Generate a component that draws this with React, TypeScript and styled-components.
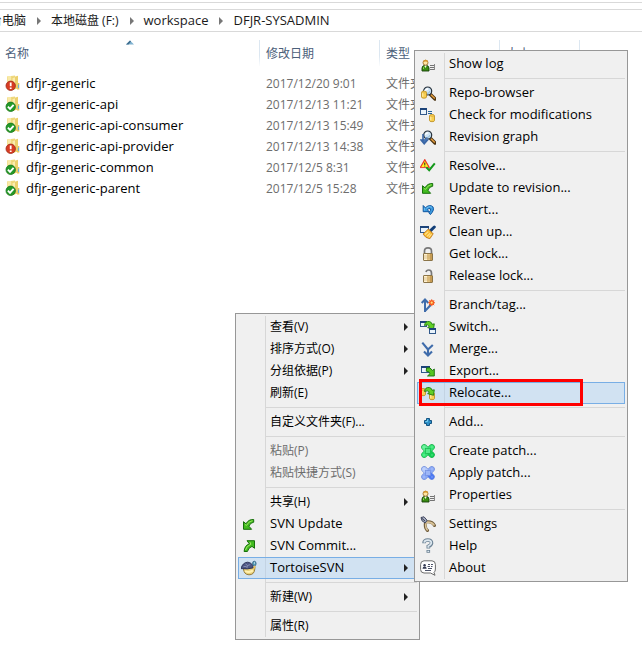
import React from "react";
import styled, { createGlobalStyle, css } from "styled-components";

const GlobalStyle = createGlobalStyle`
  *, *::before, *::after { box-sizing: border-box; }
  body {
    margin: 0;
    background: #fff;
    color: #000;
    font-family: "Open Sans", "Noto Sans CJK SC", sans-serif;
    font-size: 12px;
    overflow: hidden;
  }
  button { font: inherit; color: inherit; background: none; border: 0; padding: 0; margin: 0; }
`;

const Explorer = styled.main`
  position: relative;
  min-height: 100vh;
  overflow: hidden;
`;

/* ---------- Address bar ---------- */

const ToolbarEdge = styled.div`
  height: 10px;
  padding-top: 2px;
  border-bottom: 1px solid #d9d9d9;
  &::before { content: ""; display: block; border-top: 1px solid #d9d9d9; }
`;

const AddressBar = styled.nav`
  display: flex;
  align-items: center;
  height: 22px;
  border-bottom: 1px solid #d9d9d9;
  white-space: nowrap;
`;

const Crumb = styled.button<{ $clipped?: boolean; $latin?: boolean }>`
  font-size: ${(p) => (p.$latin ? 13 : 12)}px;
  line-height: 20px;
  color: #1a1a1a;
  ${(p) => p.$latin && "padding-bottom: 2px;"}
  ${(p) =>
    p.$clipped &&
    css`
      display: flex;
      justify-content: flex-end;
      width: 26px;
      overflow: hidden;
    `}
`;

const CrumbArrow = styled.svg`
  flex: none;
  width: 25px;
  height: 8px;
`;

/* ---------- File list ---------- */

const FileTable = styled.table`
  width: 580px;
  table-layout: fixed;
  border-collapse: separate;
  border-spacing: 0;
  margin-top: 8px;
`;

const HeadCell = styled.th`
  position: relative;
  height: 26px;
  padding: 2px 0 0 6px;
  text-align: left;
  font-weight: 400;
  line-height: 20px;
  color: #4c607a;
  border-right: 1px solid;
  border-image: linear-gradient(#dce7f1, #dce7f1 60%, #fff) 1;
  &:first-child { padding-left: 5px; }
`;

const SortMark = styled.svg`
  position: absolute;
  top: 0;
  left: 50%;
  width: 8px;
  height: 5px;
  margin-left: -4px;
`;

const ListBody = styled.tbody`
  &::before { content: ""; display: block; height: 7px; }
`;

const Cell = styled.td`
  height: 21px;
  padding: 0 0 0 6px;
  line-height: 20px;
  color: #6d6d6d;
  white-space: nowrap;
`;

const NameCell = styled(Cell)`
  padding-left: 5px;
  font-size: 13px;
  color: #000;
`;

const NameLine = styled.div`
  display: flex;
  align-items: center;
  gap: 5px;
  height: 20px;
  padding-bottom: 2px;
`;

/* ---------- Menus ---------- */

const Menu = styled.ul<{ $x: number; $y: number; $width: number }>`
  position: absolute;
  left: ${(p) => p.$x}px;
  top: ${(p) => p.$y}px;
  width: ${(p) => p.$width}px;
  margin: 0;
  padding: 2px;
  list-style: none;
  border: 1px solid #979797;
  background: linear-gradient(#d7d7d7, #d7d7d7) 29px 2px / 1px calc(100% - 4px) no-repeat #f0f0f0;
`;

const MenuItem = styled.button<{ $active?: boolean; $latin?: boolean }>`
  display: flex;
  align-items: center;
  width: 100%;
  height: 22px;
  padding: 0 8px 0 2px;
  border: 1px solid transparent;
  text-align: left;
  white-space: nowrap;
  line-height: 20px;
  font-size: ${(p) => (p.$latin ? 13 : 12)}px;
  ${(p) =>
    p.$active &&
    css`
      border-color: #78aee5;
      background: linear-gradient(#c3d3e3, #c3d3e3) 26px 0 / 1px 100% no-repeat #d1e2f2;
    `}
  &:disabled { color: #6d6d6d; }
`;

const IconSlot = styled.span`
  display: flex;
  width: 16px;
  height: 16px;
  margin-right: 13px;
`;

const Label = styled.span<{ $latin?: boolean }>`
  flex: 1;
  padding-bottom: ${(p) => (p.$latin ? 2 : 0)}px;
`;

const Separator = styled.li`
  height: 7px;
  margin-left: 28px;
  padding-top: 3px;
  &::before { content: ""; display: block; border-top: 1px solid #d7d7d7; }
`;

const SubmenuArrow = styled.svg`
  width: 4px;
  height: 8px;
`;

const Highlight = styled.div`
  position: absolute;
  left: 419px;
  top: 379px;
  width: 164px;
  height: 27px;
  border: 3px solid #f00;
  pointer-events: none;
`;

/* ---------- Icons ---------- */

const Svg = styled.svg`
  display: block;
  flex: none;
  width: 16px;
  height: 16px;
`;

const Glyph = ({ children }: { children: React.ReactNode }) => (
  <Svg viewBox="0 0 16 16" aria-hidden="true">
    {children}
  </Svg>
);

const Lens = () => (
  <g>
    <path d="M10.5 9.5 15 14" stroke="#4a3210" strokeWidth="3.4" strokeLinecap="round" />
    <path d="M11 9.7 14.8 13.5" stroke="#e8a040" strokeWidth="1.4" />
    <circle cx="7.7" cy="6" r="4" fill="#cfe4f4" stroke="#27313b" strokeWidth="1.2" />
    <path d="M5.3 5.7Q6 3.7 8.2 3.8" stroke="#fff" strokeWidth="1.2" fill="none" />
    <path d="M7 8.5Q9.5 8.5 10 6" stroke="#8db9d9" fill="none" />
  </g>
);

const Drum = ({ x, y }: { x: number; y: number }) => (
  <g transform={`translate(${x} ${y})`}>
    <path d="M.5 1.8Q.5.5 3 .5T5.5 1.8V6.5Q5.5 7.7 3 7.7T.5 6.5Z" fill="#f8cf52" stroke="#b98a1c" strokeWidth=".8" />
    <path d="M1.8 2.2V6.2" stroke="#fff0b0" />
    <path d="M1 2Q3 3 5 2" stroke="#d8a735" strokeWidth=".6" fill="none" />
  </g>
);

const Pane = ({ x, y, w = 7, h = 6 }: { x: number; y: number; w?: number; h?: number }) => (
  <g transform={`translate(${x} ${y})`}>
    <rect x=".5" y=".5" width={w - 1} height={h - 1} fill="#e9f3fb" stroke="#31588a" />
    <path d={`M0 1H${w}`} stroke="#1c4379" strokeWidth="2" />
  </g>
);

const Swoop = () => (
  <path
    d="M4.5 6.5Q5 2 9.3 2.5 11.8 3 12 5.3L14.3 4.8 13.5 10.3 7.6 8.6 9.4 7.3Q7.8 4.8 4.5 6.5Z"
    fill="#62cf26"
    stroke="#1e7d10"
    strokeWidth=".9"
  />
);

const Cross = ({ light, mid, dark, edge }: { light: string; mid: string; dark: string; edge: string }) => (
  <g>
    <path d="M4.2 4.2 11.8 11.8M11.8 4.2 4.2 11.8" stroke={edge} strokeWidth="6" strokeLinecap="round" />
    <path d="M4.2 4.2 8 8" stroke={light} strokeWidth="4.8" strokeLinecap="round" />
    <path d="M11.8 4.2 4.2 11.8" stroke={mid} strokeWidth="4.8" strokeLinecap="round" />
    <path d="M8 8 11.8 11.8" stroke={dark} strokeWidth="4.8" strokeLinecap="round" />
    <rect x="5.5" y="5.5" width="5" height="5" fill={mid} stroke={edge} strokeWidth=".6" />
    <path d="M6.5 7H7.5M8.5 7H9.5M6.5 9H7.5M8.5 9H9.5M3.5 4H4.5M11.5 4H12.5M3.5 12H4.5M11.5 12H12.5" stroke="#fff" strokeOpacity=".6" />
  </g>
);

const Padlock = ({ open }: { open?: boolean }) => (
  <g>
    <path
      d={open ? "M11.5 7V5Q11.5 2 8.7 2 6.5 2 6 4" : "M4.5 8V5Q4.5 1.8 8 1.8T11.5 5V8"}
      stroke="#777"
      strokeWidth="1.7"
      fill="none"
    />
    <rect x="3.5" y="7.5" width="9" height="7" rx=".5" fill="#e4c383" stroke="#8a7448" />
    <rect x="4" y="8" width="3" height="6" fill="#fff1cf" />
    <rect x="10" y="8" width="2" height="6" fill="#c99c51" />
    <path d="M4 10H12M4 12H12" stroke="#b8985c" strokeWidth=".5" />
  </g>
);

const icons = {
  user: (
    <Glyph>
      <path d="M2 15V12Q2.2 9.3 5.5 9.3T9 12V15Z" fill="#398c13" stroke="#173f09" strokeWidth=".9" />
      <path d="M3.5 13V11.5Q4 10.3 5 10.3" stroke="#91d948" fill="none" />
      <path d="M4.6 9.3H6.7L5.7 12.2Z" fill="#fff" />
      <circle cx="5.5" cy="6.7" r="2.5" fill="#ffe6a3" stroke="#91621d" strokeWidth=".8" />
      <path d="M3.1 6.2Q3.3 3.8 5.7 3.8T8 6.2Q6 5 3.1 6.2Z" fill="#d6962c" />
      <path d="M10 9.5H15M10 11.5H15M10 13.5H15" stroke="#737373" />
      <path d="M14.5 8V14" stroke="#888" />
    </Glyph>
  ),
  repo: (
    <Glyph>
      <Lens />
      <Drum x={1} y={5.5} />
      <path d="M4.5 6Q5.5 3.8 8 4" stroke="#fff" fill="none" />
    </Glyph>
  ),
  check: (
    <Glyph>
      <Pane x={0} y={1} w={7} h={7} />
      <path d="M8 4.5H12M8 6.5H12" stroke="#28659b" />
      <Drum x={9} y={7} />
    </Glyph>
  ),
  graph: (
    <Glyph>
      <Lens />
      <path d="M3 5V12M1 11H7.5L4.2 14.8Z" fill="#3f6cab" stroke="#3a66a5" strokeWidth="1.6" />
      <path d="M4 12.5 7.2 8.5" stroke="#4776b6" strokeWidth="1.6" />
    </Glyph>
  ),
  resolve: (
    <Glyph>
      <path d="M4.8 1.2 9.6 9.6H0Z" fill="#e8200f" stroke="#e8200f" strokeWidth=".6" strokeLinejoin="round" />
      <path d="M4.8 2.8 8.4 9H1.2Z" fill="#fff022" />
      <path d="M4.8 4.6V6.9M4.8 7.6V8.5" stroke="#151515" />
      <path d="M6.3 9.2 9.2 12.2 14.8 5.3" stroke="#14991b" strokeWidth="2" fill="none" />
    </Glyph>
  ),
  update: (
    <Glyph>
      <path
        d="M2.5 13.3V5.7L5 7.8Q7.5 3.2 12.7 3.5V6.2Q9.3 6.5 7.9 10.2L10.6 13.3Z"
        fill="#42bb20"
        stroke="#176f0c"
        strokeLinejoin="round"
      />
      <path d="M4 8.5 5.6 9.4Q7.5 5.2 11.5 4.7" stroke="#98e55b" fill="none" />
    </Glyph>
  ),
  commit: (
    <Glyph>
      <path
        d="M13.5 2.7V10.3L11 8.4Q7.5 9.5 6.4 13.5H3.1Q3.5 7.5 8.4 5.8L6 2.7Z"
        fill="#42bb20"
        stroke="#176f0c"
        strokeLinejoin="round"
      />
      <path d="M4.5 12Q5.3 8 9.9 6.2L9 4.2" stroke="#a3ea66" fill="none" />
    </Glyph>
  ),
  revert: (
    <Glyph>
      <path
        d="M3.2 3.5V9.7H9.3L7.3 7.8Q9 6 10.3 6.6 11.6 7.8 8.8 10.8L10.4 12.6Q15 7.7 12.8 4.7 9.5 2 5.4 5.8Z"
        fill="#3b9be0"
        stroke="#11569f"
      />
      <path d="M4.4 6V8.5M6.3 6.2Q9.5 3.4 12 5.3" stroke="#7cc8f5" strokeWidth=".8" fill="none" />
    </Glyph>
  ),
  clean: (
    <Glyph>
      <Pane x={0} y={2} w={9} h={7} />
      <path d="M10.8 6.3 14.3 3" stroke="#123f78" strokeWidth="3" strokeLinecap="round" />
      <path d="M3 10 8.4 5 13.2 9.8 9.9 14.7Q5.5 14.4 3 10Z" fill="#f8ba31" stroke="#bd731a" strokeWidth=".8" />
      <path d="M5 10.5 8.3 7.7M7 12.4 10 9.4M8.7 13.5 11.5 10.2" stroke="#ffe491" strokeWidth="1.1" />
      <path d="M8.5 5.5 12.5 9.5" stroke="#c98a2a" />
    </Glyph>
  ),
  lock: (
    <Glyph>
      <Padlock />
    </Glyph>
  ),
  unlock: (
    <Glyph>
      <Padlock open />
    </Glyph>
  ),
  branch: (
    <Glyph>
      <path d="M5 15V4M1.7 6 5 2.5 8.3 6M5.5 13.5 10 8.8V7" stroke="#3f6cab" strokeWidth="2" fill="none" />
      <circle cx="11.7" cy="5.7" r="2.6" fill="#ff6d24" />
      <path d="M8 5.7H15M11.7 2.2V9.2M9.2 3.2 14.2 8.2M14.2 3.2 9.2 8.2" stroke="#ee4a1c" strokeWidth=".8" />
      <circle cx="11.7" cy="5.7" r="1.1" fill="#ffe17b" />
    </Glyph>
  ),
  switch: (
    <Glyph>
      <Pane x={0} y={2} w={7} h={6} />
      <Swoop />
      <Pane x={9} y={9} w={7} h={6} />
    </Glyph>
  ),
  merge: (
    <Glyph>
      <path d="M8 14V8.5L2.3 1.7M8 8.5 12.8 4M4 10.5 8 14.5 12 10.5" stroke="#3f6cab" strokeWidth="2.1" fill="none" />
    </Glyph>
  ),
  export: (
    <Glyph>
      <Pane x={1} y={3} w={9} h={7} />
      <path
        d="M6.5 5Q10 3.4 12.5 7.4L14.3 6V13H7.5L10 10.7Q9.3 8 6.3 8.2Z"
        fill="#55c522"
        stroke="#166c10"
        strokeWidth=".9"
      />
    </Glyph>
  ),
  relocate: (
    <Glyph>
      <Drum x={0} y={3} />
      <Drum x={9} y={7} />
      <Swoop />
    </Glyph>
  ),
  add: (
    <Glyph>
      <path d="M6.5 4.5H9.5V6.5H11.5V9.5H9.5V11.5H6.5V9.5H4.5V6.5H6.5Z" fill="#2f91c9" stroke="#145482" />
      <path d="M5.5 7.5H7.5V5.5" stroke="#79d1f2" fill="none" />
    </Glyph>
  ),
  createPatch: (
    <Glyph>
      <Cross light="#5bef92" mid="#35e574" dark="#12cf55" edge="#1fae4c" />
    </Glyph>
  ),
  applyPatch: (
    <Glyph>
      <Cross light="#b4c9fb" mid="#8caaf6" dark="#4b78f2" edge="#7590dc" />
    </Glyph>
  ),
  settings: (
    <Glyph>
      <path d="M6 6Q12 5 14.5 9.5M5.5 6.5Q4.5 12 7.5 14.5" stroke="#725e3c" strokeWidth="3" fill="none" strokeLinecap="round" />
      <path d="M6 6.3Q11.5 5.5 14 9M6 7Q5 11.5 7.3 14" stroke="#d9c398" strokeWidth="1.6" fill="none" strokeLinecap="round" />
      <path d="M1 1.5 4 .8 7 4.2 5.3 7 2 4.8Z" fill="#a6adc0" stroke="#434961" />
      <path d="M1.5 2 5 5" stroke="#343b52" />
    </Glyph>
  ),
  help: (
    <Glyph>
      <path d="M4 5.2Q4 2 7.8 2 11.7 2 11.5 5.2 11.3 7 8.3 8.4V10.4M8.3 12V14.8" stroke="#6d8395" strokeWidth="3.6" fill="none" />
      <path d="M4.2 4.6Q4.5 2.2 7.8 2.2 11.5 2.2 11.3 5.2 11 7 8.3 8.2V9.7M8.3 12.7V14.1" stroke="#dce7ef" strokeWidth="1.8" fill="none" />
    </Glyph>
  ),
  about: (
    <Glyph>
      <path
        d="M4 .8H12Q15.4 1 15.4 4.5V9Q15.4 11.7 14 12.3L15 15.3 10.5 13H4Q.6 12.8.6 9.5V4.5Q.6 1 4 .8Z"
        fill="#fff"
        stroke="#6a6a6a"
      />
      <circle cx="4.6" cy="5.2" r="1.2" fill="#343a52" />
      <path d="M2.5 8.7Q2.6 6.5 4.6 6.5T6.7 8.7Z" fill="#343a52" />
      <path d="M8 4.5H10M11 4.5H13M7.5 6.5H10M11 6.5H12.5M8 8.5H12M5 10.5H11" stroke="#4d5369" />
    </Glyph>
  ),
  tortoise: (
    <Glyph>
      <path d="M2.3 8Q2.7 14.7 8 14.8T13.8 9L14 6.5 11 8Z" fill="#e8cf79" stroke="#8d7434" strokeWidth=".9" />
      <ellipse cx="13.3" cy="3.6" rx="1.8" ry="2.4" fill="#549fbc" stroke="#295573" strokeWidth=".7" />
      <path d="M14 6 12.4 9" stroke="#e9c25b" strokeWidth="1.6" />
      <path d="M0 8.6Q1.5 2.6 6.5 2.2 11.5 2.4 12 7.8 7 9.6 0 8.6Z" fill="#4d5684" stroke="#292f54" strokeWidth=".9" />
      <path d="M4.5 4 6.5 5.5 5.8 8M6.5 5.5 9.2 4.6M2.5 6.5H5.5" stroke="#8b93b5" strokeWidth=".9" fill="none" />
      <path d="M4 11Q7 13 12 10.5" stroke="#fff1b1" strokeWidth="2" fill="none" />
      <path d="M13 3H14" stroke="#fff" />
    </Glyph>
  ),
};

type IconName = keyof typeof icons;

const FolderIcon = ({ modified }: { modified?: boolean }) => (
  <Glyph>
    <path d="M2 1.5 10 .5V14.5H2Z" fill="#efd980" />
    <path d="M2.5 1H6V13H2.5Z" fill="#f8e9a7" />
    <path d="M7 2.5 13 .8V13.5L7 15Z" fill="#ecd06c" />
    <path d="M7.5 3 10 2.3V13L7.5 14Z" fill="#faecae" />
    <path d="M13 8H14.3V14.5H12Z" fill="#e5c65c" />
    <path d="M13.5 9.5V13" stroke="#67aee2" />
    <circle cx="5.7" cy="10.8" r="4.7" fill={modified ? "#d83c22" : "#249a28"} stroke={modified ? "#9c2418" : "#14741c"} strokeWidth=".8" />
    {modified ? (
      <path d="M5.7 7.5V11.3M5.7 12.4V14" stroke="#fff" strokeWidth="1.8" />
    ) : (
      <path d="M2.9 10.7 5 12.9 8.6 8.8" stroke="#fff" strokeWidth="1.9" fill="none" />
    )}
  </Glyph>
);

/* ---------- Data ---------- */

const crumbs = [
  { label: "这台电脑", clipped: true },
  { label: "本地磁盘 (F:)" },
  { label: "workspace", latin: true },
  { label: "DFJR-SYSADMIN", latin: true },
];

const files = [
  { name: "dfjr-generic", date: "2017/12/20 9:01", modified: true },
  { name: "dfjr-generic-api", date: "2017/12/13 11:21" },
  { name: "dfjr-generic-api-consumer", date: "2017/12/13 15:49" },
  { name: "dfjr-generic-api-provider", date: "2017/12/13 14:38", modified: true },
  { name: "dfjr-generic-common", date: "2017/12/5 8:31" },
  { name: "dfjr-generic-parent", date: "2017/12/5 15:28" },
];

type Entry = {
  label: string;
  icon?: IconName;
  submenu?: boolean;
  disabled?: boolean;
  active?: boolean;
};

const contextGroups: Entry[][] = [
  [
    { label: "查看(V)", submenu: true },
    { label: "排序方式(O)", submenu: true },
    { label: "分组依据(P)", submenu: true },
    { label: "刷新(E)" },
  ],
  [{ label: "自定义文件夹(F)..." }],
  [
    { label: "粘贴(P)", disabled: true },
    { label: "粘贴快捷方式(S)", disabled: true },
  ],
  [
    { label: "共享(H)", submenu: true },
    { label: "SVN Update", icon: "update" },
    { label: "SVN Commit...", icon: "commit" },
    { label: "TortoiseSVN", icon: "tortoise", submenu: true, active: true },
  ],
  [{ label: "新建(W)", submenu: true }],
  [{ label: "属性(R)" }],
];

const svnGroups: Entry[][] = [
  [{ label: "Show log", icon: "user" }],
  [
    { label: "Repo-browser", icon: "repo" },
    { label: "Check for modifications", icon: "check" },
    { label: "Revision graph", icon: "graph" },
  ],
  [
    { label: "Resolve...", icon: "resolve" },
    { label: "Update to revision...", icon: "update" },
    { label: "Revert...", icon: "revert" },
    { label: "Clean up...", icon: "clean" },
    { label: "Get lock...", icon: "lock" },
    { label: "Release lock...", icon: "unlock" },
  ],
  [
    { label: "Branch/tag...", icon: "branch" },
    { label: "Switch...", icon: "switch" },
    { label: "Merge...", icon: "merge" },
    { label: "Export...", icon: "export" },
    { label: "Relocate...", icon: "relocate", active: true },
  ],
  [{ label: "Add...", icon: "add" }],
  [
    { label: "Create patch...", icon: "createPatch" },
    { label: "Apply patch...", icon: "applyPatch" },
    { label: "Properties", icon: "user" },
  ],
  [
    { label: "Settings", icon: "settings" },
    { label: "Help", icon: "help" },
    { label: "About", icon: "about" },
  ],
];

const MenuEntries = ({ groups }: { groups: Entry[][] }) => (
  <>
    {groups.map((group, index) => (
      <React.Fragment key={index}>
        {index > 0 && <Separator role="separator" />}
        {group.map((entry) => (
          <li key={entry.label} role="none">
            <MenuItem
              type="button"
              role="menuitem"
              disabled={entry.disabled}
              aria-haspopup={entry.submenu ? "menu" : undefined}
              $active={entry.active}
              $latin={!!entry.icon}
            >
              <IconSlot>{entry.icon && icons[entry.icon]}</IconSlot>
              <Label $latin={!!entry.icon}>{entry.label}</Label>
              {entry.submenu && (
                <SubmenuArrow viewBox="0 0 4 8" aria-hidden="true">
                  <path d="M0 0 4 4 0 8Z" fill="#222" />
                </SubmenuArrow>
              )}
            </MenuItem>
          </li>
        ))}
      </React.Fragment>
    ))}
  </>
);

export default function App() {
  return (
    <Explorer>
      <GlobalStyle />
      <ToolbarEdge />
      <AddressBar aria-label="Address">
        {crumbs.map((crumb, index) => (
          <React.Fragment key={crumb.label}>
            {index > 0 && (
              <CrumbArrow viewBox="0 0 25 8" aria-hidden="true">
                <path d="M11 0 15 4 11 8Z" fill="#777" />
              </CrumbArrow>
            )}
            <Crumb type="button" $clipped={crumb.clipped} $latin={crumb.latin}>
              {crumb.label}
            </Crumb>
          </React.Fragment>
        ))}
      </AddressBar>

      <FileTable>
        <colgroup>
          <col width="260" />
          <col width="120" />
          <col width="120" />
          <col width="80" />
        </colgroup>
        <thead>
          <tr>
            <HeadCell scope="col" aria-sort="ascending">
              名称
              <SortMark viewBox="0 0 8 5" aria-hidden="true">
                <path d="M0 4.5 4 .5 8 4.5Z" fill="#7fb2d0" />
                <path d="M0 4.5 4 .5 5 1.5 2.5 4.5Z" fill="#3c6b8c" />
              </SortMark>
            </HeadCell>
            <HeadCell scope="col">修改日期</HeadCell>
            <HeadCell scope="col">类型</HeadCell>
            <HeadCell scope="col">大小</HeadCell>
          </tr>
        </thead>
        <ListBody>
          {files.map((file) => (
            <tr key={file.name}>
              <NameCell>
                <NameLine>
                  <FolderIcon modified={file.modified} />
                  {file.name}
                </NameLine>
              </NameCell>
              <Cell>{file.date}</Cell>
              <Cell>文件夹</Cell>
              <Cell />
            </tr>
          ))}
        </ListBody>
      </FileTable>

      <Menu role="menu" aria-label="Folder" $x={235} $y={313} $width={185}>
        <MenuEntries groups={contextGroups} />
      </Menu>
      <Menu role="menu" aria-label="TortoiseSVN" $x={414} $y={50} $width={214}>
        <MenuEntries groups={svnGroups} />
      </Menu>
      <Highlight />
    </Explorer>
  );
}
